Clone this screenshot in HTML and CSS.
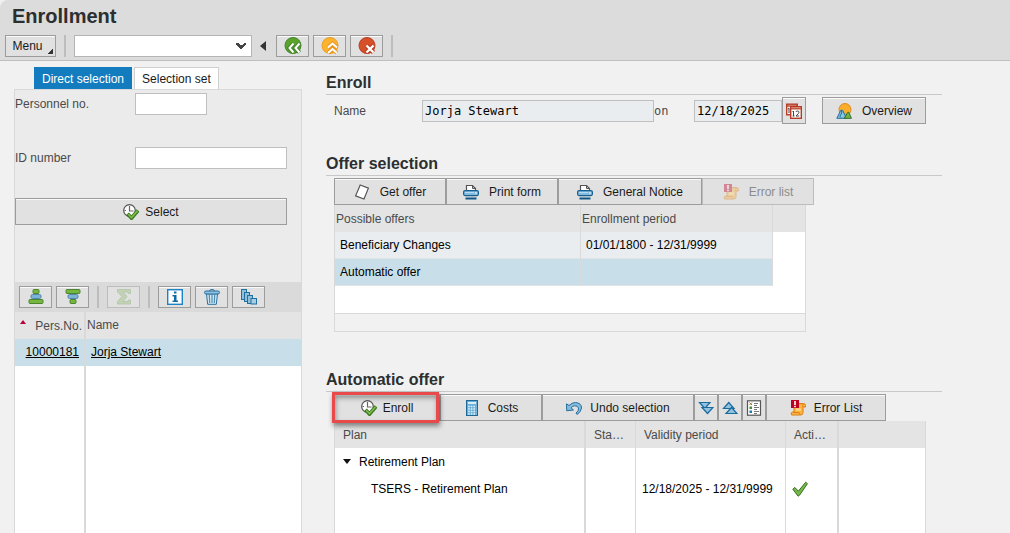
FILE: index.html
```html
<!DOCTYPE html>
<html lang="en">

<head>
    <meta charset="UTF-8">
    <meta name="viewport" content="width=device-width, initial-scale=1.0">
    <title>Enrollment</title>
    <link rel="stylesheet" href="styles.css">
</head>

<body>

    <!-- shared icons -->
    <svg class="sprite" aria-hidden="true">
        <symbol id="i-execute" viewBox="0 0 16 16">
            <circle cx="6.500" cy="6.500" r="5.800" fill="#fff" stroke="#555" stroke-width="1.200" />
            <path d="M6.500 2v5h4M1.500 6.500h1.500" fill="none" stroke="#666" stroke-width="1.200" />
            <path d="M4.500 9.800l4 4.200 6.500-7.500" fill="none" stroke="#3b7a24" stroke-width="3.800" />
            <path d="M5.200 10.300l3.300 3.200 6-6.800" fill="none" stroke="#82bb4d" stroke-width="1.600" />
        </symbol>
        <symbol id="i-page" viewBox="0 0 16 16">
            <path d="M6.200 1l8.200 3.200-4.400 10.800-8.400-3.200z" fill="#fff" stroke="#555" stroke-width="1.200" />
        </symbol>
        <symbol id="i-print" viewBox="0 0 16 16">
            <path d="M3.500 6.500v-5h6l3 3v2" fill="#fff" stroke="#555" stroke-width="1.200" />
            <path d="M9.500 1.500v3h3" fill="none" stroke="#555" />
            <rect x=".6" y="6.600" width="14.800" height="5" rx="1.500" fill="#83bbe0" stroke="#15608f" stroke-width="1.200" />
            <path d="M2 8.500h9" stroke="#b9dcf0" />
            <path d="M12 9h2" stroke="#fff" />
            <path d="M2.500 14.500h11" stroke="#0f5684" stroke-width="2" />
        </symbol>
        <symbol id="i-error" viewBox="0 0 16 16">
            <path d="M4 3.500h9.500q2 0 2 2v1.500h-2.500v5.500q0 2.500-2.500 2.500h-9q-1.200-2.500 1-3h1.500z" fill="#fbb540" stroke="#e07d14" />
            <path d="M3 12.500h6q.2 2 1.500 2M13 7q-1-2 .5-3" fill="none" stroke="#e07d14" />
            <path d="M6 9.500h5" stroke="#fddb90" stroke-width="2" />
            <rect x="1" y="0" width="8" height="8" fill="#c00020" />
            <path d="M5 1v4M5 5.800v1.400" stroke="#fff" stroke-width="1.600" />
        </symbol>
        <symbol id="i-calendar" viewBox="0 0 16 16">
            <rect x=".7" y="1.200" width="10.600" height="10.600" fill="#fff" stroke="#b63a25" stroke-width="1.400" />
            <path d="M1 3h10" stroke="#b63a25" stroke-width="1.400" />
            <path d="M3 5v5M1.800 6l1.200-1" fill="none" stroke="#444" />
            <rect x="4.700" y="3.700" width="10.600" height="11.600" fill="#fff" stroke="#b63a25" stroke-width="1.400" />
            <path d="M5 5.500h10" stroke="#c65a40" stroke-width="2" />
            <path d="M6.500 9l1-1v5M6.500 13h2M10 9q0-1 1.500-1t1.500 1.200q0 1-3 3.800h3.200" fill="none" stroke="#444" />
        </symbol>
        <symbol id="i-overview" viewBox="0 0 16 16">
            <circle cx="9" cy="6.500" r="6" fill="#f8ad2c" stroke="#e08a1b" />
            <path d="M.8 15.300l4-8h1.800l4 8z" fill="#8bc4e3" stroke="#1e6c9c" />
            <path d="M5.700 7.500v2.500l-1.500 2.500v2" fill="none" stroke="#1e6c9c" />
            <path d="M8.200 15.300l3.600-6h1l2.600 6z" fill="#72b243" stroke="#31702b" />
        </symbol>
        <symbol id="i-back" viewBox="0 0 18 18">
            <circle cx="9" cy="8.500" r="8" fill="#5ba32b" stroke="#41822a" />
            <path d="M9.500 6.500l-4 4.500 4 4.500M15.500 6.500l-4 4.500 4 4.500" fill="none" stroke="#41822a" stroke-width="4" />
            <path d="M9.500 6.500l-4 4.500 4 4.500M15.500 6.500l-4 4.500 4 4.500" fill="none" stroke="#fff" stroke-width="2" />
        </symbol>
        <symbol id="i-exit" viewBox="0 0 18 18">
            <circle cx="9" cy="8.500" r="8" fill="#fcb42d" stroke="#ec9b24" />
            <path d="M7 10.500l4.500-4 4.500 4M7 16l4.500-4 4.500 4" fill="none" stroke="#e99521" stroke-width="4" />
            <path d="M7 10.500l4.500-4 4.500 4M7 16l4.500-4 4.500 4" fill="none" stroke="#fff" stroke-width="2" />
        </symbol>
        <symbol id="i-cancel" viewBox="0 0 18 18">
            <circle cx="9" cy="8.500" r="8" fill="#d6502a" stroke="#b83c20" />
            <path d="M8.500 8.500l7 7M15.500 8.500l-7 7" stroke="#b83c20" stroke-width="4.500" />
            <path d="M8.500 8.500l7 7M15.500 8.500l-7 7" stroke="#fff" stroke-width="2.400" />
        </symbol>
        <symbol id="i-asc" viewBox="0 0 16 16">
            <rect x="5" y=".5" width="6" height="4" rx="1" fill="#75b63e" stroke="#4d8430" />
            <rect x="3" y="5.500" width="10" height="4" rx="1.500" fill="#7fb2d6" stroke="#4f87ad" />
            <rect x="1" y="10.500" width="14" height="4" rx="1" fill="#75b63e" stroke="#4d8430" />
        </symbol>
        <symbol id="i-desc" viewBox="0 0 16 16">
            <rect x="1" y=".5" width="14" height="4" rx="1" fill="#75b63e" stroke="#4d8430" />
            <rect x="3" y="5.500" width="10" height="4" rx="1.500" fill="#7fb2d6" stroke="#4f87ad" />
            <rect x="5" y="10.500" width="6" height="4" rx="1" fill="#75b63e" stroke="#4d8430" />
        </symbol>
        <symbol id="i-sum" viewBox="0 0 16 16">
            <path d="M1.500.5h13v4h-2l-1-1.500h-4.500l4 4.500-4 5h4.500l1-1.500h2v4h-13v-2.500l4.500-5-4.500-4.500z" fill="#94bd76" stroke="#78a560" />
        </symbol>
        <symbol id="i-info" viewBox="0 0 16 16">
            <rect x=".7" y=".7" width="14.600" height="14.600" fill="#fff" stroke="#1b83c5" stroke-width="1.400" />
            <path d="M7 2.500h2.500v2h-2.500zM5.500 6h4v5.500h1.500v1.500h-5.500v-1.500h1.500v-4h-1.500z" fill="#106ca8" />
        </symbol>
        <symbol id="i-trash" viewBox="0 0 16 16">
            <path d="M2.500 5l1.200 10.300h8.600l1.200-10.300z" fill="#d5e9f4" stroke="#286f9d" />
            <path d="M5.300 6l.4 8M8 6v8M10.700 6l-.4 8" stroke="#4f8db5" stroke-width="1.200" />
            <path d="M5.500 2q0-1.500 2.500-1.500t2.500 1.500" fill="none" stroke="#286f9d" />
            <rect x=".5" y="2" width="15" height="3" rx="1.500" fill="#8fc0dd" stroke="#286f9d" />
        </symbol>
        <symbol id="i-stack" viewBox="0 0 16 16">
            <rect x=".5" y=".5" width="5" height="10" fill="#8fbfda" stroke="#226e9f" />
            <rect x="3.500" y="3.500" width="5" height="9" fill="#8fbfda" stroke="#226e9f" />
            <rect x="6.500" y="6.500" width="5" height="8" fill="#8fbfda" stroke="#226e9f" />
            <rect x="10" y="9.500" width="5.500" height="5.500" fill="#a6cfe5" stroke="#226e9f" />
        </symbol>
        <symbol id="i-calc" viewBox="0 0 16 16">
            <rect x="2.500" y=".5" width="11" height="15" fill="#6aaed6" stroke="#1a6798" />
            <rect x="4" y="2" width="8" height="2" fill="#d7edf8" />
            <path d="M4.200 6.500h8M4.200 9h8M4.200 11.500h8M4.200 14h8" stroke="#e4f3fb" stroke-width="1.500" stroke-dasharray="1.600 1" />
        </symbol>
        <symbol id="i-undo" viewBox="0 0 16 16">
            <path d="M3 5.500q3-3 6.500-3 6 .5 6 5.500-.5 4-4.500 6.500l-1-1.500q3-2 2.500-5-1-2.500-4-2.200-1.800.2-3.500 2l2.500 2.200-6.800.8-.2-7z" fill="#83bbdc" stroke="#256f9e" />
        </symbol>
        <symbol id="i-expand" viewBox="0 0 16 16">
            <path d="M1.500 2.500h10.500l-5.200 6z" fill="#90c3df" stroke="#1b6b9d" stroke-width="1.200" />
            <path d="M4 7.500h11l-5.500 6z" fill="#90c3df" stroke="#1b6b9d" stroke-width="1.200" />
        </symbol>
        <symbol id="i-collapse" viewBox="0 0 16 16">
            <path d="M1.500 8.500h10.500l-5.200-6z" fill="#90c3df" stroke="#1b6b9d" stroke-width="1.200" />
            <path d="M4 13.500h11l-5.500-6z" fill="#90c3df" stroke="#1b6b9d" stroke-width="1.200" />
        </symbol>
        <symbol id="i-legend" viewBox="0 0 16 16">
            <rect x="1.500" y=".8" width="13" height="14.400" fill="#fff" stroke="#555" stroke-width="1.200" />
            <path d="M3.500 2.500l2.500 2.500M6 2.500l-2.500 2.500" stroke="#a07c24" />
            <rect x="3.500" y="6.500" width="2.500" height="2.500" fill="#448d35" />
            <rect x="3.500" y="10.500" width="2.500" height="2.500" fill="#1f76ad" />
            <path d="M8 3.500h4M8 5.500h3M8 7.500h5M8 9.500h3M8 11.500h5M8 13.500h3" stroke="#777" />
        </symbol>
        <symbol id="i-check" viewBox="0 0 16 16">
            <path d="M.8 8.200l2-1.800 3.500 3.800 7.400-9 1.700 1.500-7.800 11.500-1.500 1z" fill="#77b944" stroke="#35702b" />
        </symbol>
    </svg>

    <header class="app-header">
        <h1>Enrollment</h1>
        <div class="app-bar">
            <button class="btn menu-btn">Menu</button>
            <span class="separator"></span>
            <select class="command" aria-label="Command">
                <option></option>
            </select>
            <svg class="arrow-left" viewBox="0 0 6 10" aria-hidden="true"><path d="M6 0v10l-6-5z" fill="#333" /></svg>
            <button class="btn icon-btn" aria-label="Back"><svg class="icon-lg"><use href="#i-back" /></svg></button>
            <button class="btn icon-btn" aria-label="Exit"><svg class="icon-lg"><use href="#i-exit" /></svg></button>
            <button class="btn icon-btn" aria-label="Cancel"><svg class="icon-lg"><use href="#i-cancel" /></svg></button>
            <span class="separator"></span>
        </div>
    </header>

    <main>
        <aside class="selection">
            <div class="tabs">
                <button class="tab active">Direct selection</button>
                <button class="tab">Selection set</button>
            </div>
            <div class="selection-panel">
                <form class="search">
                    <label for="personnel">Personnel no.</label>
                    <input type="text" id="personnel" class="short">
                    <label for="id-number">ID number</label>
                    <input type="text" id="id-number">
                    <button type="button" class="btn select-btn"><svg class="icon"><use href="#i-execute" /></svg>Select</button>
                </form>
                <div class="list-bar">
                    <button class="btn icon-btn" aria-label="Sort ascending"><svg class="icon"><use href="#i-asc" /></svg></button>
                    <button class="btn icon-btn" aria-label="Sort descending"><svg class="icon"><use href="#i-desc" /></svg></button>
                    <span class="separator"></span>
                    <button class="btn icon-btn" aria-label="Total" disabled><svg class="icon"><use href="#i-sum" /></svg></button>
                    <span class="separator"></span>
                    <button class="btn icon-btn" aria-label="Information"><svg class="icon"><use href="#i-info" /></svg></button>
                    <button class="btn icon-btn" aria-label="Delete"><svg class="icon"><use href="#i-trash" /></svg></button>
                    <button class="btn icon-btn" aria-label="Variants"><svg class="icon"><use href="#i-stack" /></svg></button>
                </div>
                <div class="fill">
                    <table class="people">
                        <thead>
                            <tr>
                                <th class="pers-no">
                                    <div class="sorted"><svg class="sort-mark" viewBox="0 0 6 4" aria-hidden="true"><path d="M3 0l3 4h-6z" fill="#b5003a" /></svg>Pers.No.</div>
                                </th>
                                <th>Name</th>
                            </tr>
                        </thead>
                        <tbody>
                            <tr class="selected">
                                <td class="pers-no"><a href="#">10000181</a></td>
                                <td><a href="#">Jorja Stewart</a></td>
                            </tr>
                            <tr class="rest">
                                <td></td>
                                <td></td>
                            </tr>
                        </tbody>
                    </table>
                </div>
            </div>
        </aside>

        <div class="content">
            <section>
                <h2>Enroll</h2>
                <div class="enroll-row">
                    <label for="name">Name</label>
                    <input type="text" id="name" value="Jorja Stewart" readonly>
                    <label for="date" class="on">on</label>
                    <input type="text" id="date" value="12/18/2025" readonly>
                    <button class="btn tool calendar" aria-label="Calendar"><svg class="icon"><use href="#i-calendar" /></svg></button>
                    <button class="btn tool overview"><svg class="icon"><use href="#i-overview" /></svg>Overview</button>
                </div>
            </section>

            <section>
                <h2>Offer selection</h2>
                <div class="tools offer-tools">
                    <button class="btn tool"><svg class="icon"><use href="#i-page" /></svg>Get offer</button>
                    <button class="btn tool"><svg class="icon"><use href="#i-print" /></svg>Print form</button>
                    <button class="btn tool"><svg class="icon"><use href="#i-print" /></svg>General Notice</button>
                    <button class="btn tool" disabled><svg class="icon"><use href="#i-error" /></svg>Error list</button>
                </div>
                <div class="offers-box">
                    <table class="offers">
                        <thead>
                            <tr>
                                <th class="offer">Possible offers</th>
                                <th class="period">Enrollment period</th>
                                <th></th>
                            </tr>
                        </thead>
                        <tbody>
                            <tr>
                                <td>Beneficiary Changes</td>
                                <td>01/01/1800 - 12/31/9999</td>
                                <td class="blank"></td>
                            </tr>
                            <tr class="selected">
                                <td>Automatic offer</td>
                                <td></td>
                                <td class="blank"></td>
                            </tr>
                            <tr>
                                <td class="blank" colspan="3"></td>
                            </tr>
                        </tbody>
                    </table>
                    <div class="offers-foot"></div>
                </div>
            </section>

            <section class="plan-section">
                <h2>Automatic offer</h2>
                <div class="tools plan-tools">
                    <button class="btn tool highlighted"><svg class="icon"><use href="#i-execute" /></svg>Enroll</button>
                    <button class="btn tool"><svg class="icon"><use href="#i-calc" /></svg>Costs</button>
                    <button class="btn tool"><svg class="icon"><use href="#i-undo" /></svg>Undo selection</button>
                    <button class="btn tool" aria-label="Expand all"><svg class="icon"><use href="#i-expand" /></svg></button>
                    <button class="btn tool" aria-label="Collapse all"><svg class="icon"><use href="#i-collapse" /></svg></button>
                    <button class="btn tool" aria-label="Legend"><svg class="icon"><use href="#i-legend" /></svg></button>
                    <button class="btn tool"><svg class="icon"><use href="#i-error" /></svg>Error List</button>
                </div>
                <div class="fill">
                    <table class="plans">
                        <thead>
                            <tr>
                                <th class="plan">Plan</th>
                                <th class="status">Sta…</th>
                                <th class="validity">Validity period</th>
                                <th class="active-col">Acti…</th>
                                <th></th>
                            </tr>
                        </thead>
                        <tbody>
                            <tr>
                                <td>
                                    <div class="node"><svg class="twisty" viewBox="0 0 8 5" aria-hidden="true"><path d="M0 0h8l-4 5z" fill="#111" /></svg>Retirement Plan</div>
                                </td>
                                <td></td>
                                <td></td>
                                <td></td>
                                <td></td>
                            </tr>
                            <tr>
                                <td class="leaf">TSERS - Retirement Plan</td>
                                <td></td>
                                <td>12/18/2025 - 12/31/9999</td>
                                <td><svg class="icon" role="img" aria-label="Active"><use href="#i-check" /></svg></td>
                                <td></td>
                            </tr>
                            <tr class="rest">
                                <td></td>
                                <td></td>
                                <td></td>
                                <td></td>
                                <td></td>
                            </tr>
                        </tbody>
                    </table>
                </div>
            </section>
        </div>
    </main>

</body>

</html>
```
FILE: styles.css
```css
* {
    box-sizing: border-box;
}

:root {
    --bar: #dcdcdc;
    --page: #f1f1f1;
    --panel: #ebebeb;
    --head: #e4e4e4;
    --button: #e1e1e1;
    --edge: #9c9c9c;
    --line: #d9d9d9;
    --selected: #c8dfe9;
    --readonly: #e9edf0;
}

body {
    margin: 0;
    height: 100vh;
    display: flex;
    flex-direction: column;
    overflow: hidden;
    background: var(--page);
    color: #000;
    font-family: "Liberation Sans", Arial, sans-serif;
    font-size: 12px;
    line-height: 16px;
}

h1,
h2 {
    margin: 0;
    color: #2c2f30;
}

button,
input,
select {
    font: inherit;
    margin: 0;
}

.sprite {
    display: none;
}

.icon {
    display: block;
    flex: none;
    width: 16px;
    height: 16px;
}

.icon-lg {
    display: block;
    width: 18px;
    height: 18px;
}

/* buttons */
.btn {
    display: flex;
    align-items: center;
    justify-content: center;
    gap: 8px;
    padding: 0;
    background: var(--button);
    border: 1px solid var(--edge);
    border-radius: 0;
    box-shadow: inset 0 1px #fafafa;
    color: #1a1a1a;
}

.btn:disabled {
    border-color: #bcbcbc;
    box-shadow: none;
    color: #8b8b8b;
}

.btn:disabled .icon {
    opacity: .4;
}

.icon-btn {
    width: 33px;
    height: 22px;
}

.tool {
    height: 27px;
}

.separator {
    width: 2px;
    height: 22px;
    margin: 0 4px;
    background: #bdbdbd;
}

/* header */
.app-header {
    flex: none;
    background: var(--bar);
    border-bottom: 1px solid #bfbfbf;
    border-top-left-radius: 8px;
}

.app-header h1 {
    padding: 4px 12px 7px;
    font-size: 20px;
    line-height: 24px;
}

.app-bar {
    display: flex;
    align-items: center;
    gap: 4px;
    padding: 0 5px 3px;
}

.menu-btn {
    width: 51px;
    height: 22px;
    padding-right: 6px;
    background: linear-gradient(135deg, transparent 50%, #333 50%) right 2px bottom 2px / 5px 5px no-repeat var(--button);
}

.command {
    appearance: none;
    width: 178px;
    height: 22px;
    border: 1px solid #b5b5b5;
    border-radius: 0;
    background:
        linear-gradient(45deg, transparent 45%, #444 45%, #444 75%, transparent 75%) right 10px top 7px / 5px 7px no-repeat,
        linear-gradient(-45deg, transparent 45%, #444 45%, #444 75%, transparent 75%) right 5px top 7px / 5px 7px no-repeat,
        #fff;
}

.arrow-left {
    width: 6px;
    height: 10px;
    margin: 0 6px 0 4px;
}

/* left side */
main {
    flex: 1;
    min-height: 0;
    display: grid;
    grid-template-columns: 288px minmax(0, 1fr);
    grid-template-rows: minmax(0, 1fr);
    column-gap: 24px;
    padding: 6px 68px 0 14px;
}

.selection {
    display: flex;
    flex-direction: column;
}

.tabs {
    display: flex;
    gap: 2px;
    padding-left: 20px;
}

.tab {
    height: 22px;
    padding: 0 7px;
    background: #fff;
    border: 1px solid #cfcfcf;
    border-bottom: 0;
    color: #1a1a1a;
}

.tab.active {
    background: #127cbe;
    border-color: #127cbe;
    color: #fff;
}

.selection-panel {
    flex: 1;
    min-height: 0;
    display: flex;
    flex-direction: column;
    background: var(--panel);
    border: 1px solid var(--line);
    border-bottom: 0;
}

.search {
    display: grid;
    grid-template-columns: 120px 1fr;
    align-items: center;
    row-gap: 32px;
    height: 192px;
    align-content: start;
    padding: 3px 14px 0 0;
    color: #4a4a4a;
}

.search input {
    width: 100%;
    height: 22px;
    background: #fff;
    border: 1px solid #bfbfbf;
}

.search input.short {
    width: 72px;
}

.select-btn {
    grid-column: 1 / 3;
    height: 27px;
    margin-top: -3px;
    gap: 6px;
}

.list-bar {
    display: flex;
    gap: 4px;
    padding: 4px;
    background: #dadada;
}

/* tables */
table {
    border-collapse: separate;
    border-spacing: 0;
    table-layout: fixed;
    width: 100%;
}

th {
    font-weight: normal;
    text-align: left;
    color: #4a4a4a;
    background: var(--head);
}

th,
td {
    height: 27px;
    padding: 0;
    border-right: 1px solid var(--line);
}

th:last-child,
td:last-child {
    border-right: 0;
}

.fill {
    flex: 1;
    min-height: 0;
}

.fill table {
    height: 100%;
    background: #fff;
}

.rest td {
    height: auto;
}

.selected td {
    background: var(--selected);
}

.people th:first-child,
.people td:first-child {
    border-right-width: 2px;
}

.people .pers-no {
    width: 71px;
    text-align: right;
    padding-right: 5px;
}

.people th.pers-no {
    padding: 0 2px 0 5px;
}

.people th {
    padding-left: 1px;
}

.people td {
    padding-left: 5px;
}

.people th,
.people .selected td {
    padding-bottom: 1px;
}

.people a {
    color: #000;
}

.sorted {
    display: flex;
    justify-content: space-between;
    align-items: center;
}

.sort-mark {
    width: 6px;
    height: 4px;
    margin-bottom: 8px;
}

/* right side */
.content {
    display: flex;
    flex-direction: column;
    min-height: 0;
}

h2 {
    padding: 6px 0 1px;
    border-bottom: 1px solid #c8c8c8;
    font-size: 16px;
    line-height: 20px;
}

.enroll-row {
    display: flex;
    align-items: center;
    padding: 2px 0 24px 8px;
    color: #4a4a4a;
}

.enroll-row input {
    height: 22px;
    padding: 0 2px;
    background: var(--readonly);
    border: 1px solid #bfbfbf;
    color: #000;
    font-family: "DejaVu Sans Mono", monospace;
}

.enroll-row label {
    width: 88px;
}

.enroll-row .on {
    width: 40px;
    font-family: "DejaVu Sans Mono", monospace;
}

#name {
    width: 232px;
}

#date {
    width: 88px;
}

.calendar {
    width: 24px;
    margin-right: 16px;
}

.overview {
    width: 104px;
    gap: 10px;
}

.tools {
    display: grid;
    justify-content: start;
    margin: 2px 0 0 8px;
}

.offer-tools {
    grid-template-columns: 112px 112px 144px 112px;
}

.offer-tools .btn {
    gap: 10px;
}

.plan-tools {
    grid-template-columns: 106px 102px 152px 24px 24px 24px 120px;
}

.offers-box {
    width: 472px;
    margin: 0 0 32px 8px;
    border: 1px solid var(--line);
    border-top: 0;
}

.offers .offer {
    width: 246px;
}

.offers .period {
    width: 192px;
}

.offers th {
    padding-left: 1px;
}

.offers td {
    padding-left: 5px;
    background: var(--readonly);
    border-bottom: 1px solid #dfe3e5;
}

.offers .selected td {
    background: var(--selected);
}

.offers td.blank {
    background: #fff;
    border-bottom: 0;
}

.offers-foot {
    height: 18px;
    border-top: 1px solid var(--line);
}

.plan-section {
    flex: 1;
    min-height: 0;
    display: flex;
    flex-direction: column;
}

.plan-section .fill {
    margin: 0 16px 0 8px;
    border: 1px solid var(--line);
    border-width: 0 1px;
}

.highlighted {
    position: relative;
    gap: 6px;
    z-index: 1;
}

.highlighted::after {
    content: "";
    position: absolute;
    inset: -3px 0 -3px -3px;
    border: 3px solid #e8494a;
    box-shadow: 1px 3px 5px rgba(0, 0, 0, .45), inset 1px 3px 5px rgba(0, 0, 0, .35);
}

.plans .plan {
    width: 251px;
}

.plans .status {
    width: 50px;
}

.plans .validity {
    width: 150px;
}

.plans .active-col {
    width: 53px;
}

.plans th {
    padding-left: 8px;
}

.plans td {
    padding-left: 6px;
}

.plans th:nth-child(1),
.plans td:nth-child(1),
.plans th:nth-child(4),
.plans td:nth-child(4) {
    border-right-width: 2px;
}

.plans td.leaf {
    padding-left: 36px;
}

.node {
    display: flex;
    align-items: center;
    gap: 8px;
    padding-left: 2px;
}

.twisty {
    width: 8px;
    height: 5px;
}
```
